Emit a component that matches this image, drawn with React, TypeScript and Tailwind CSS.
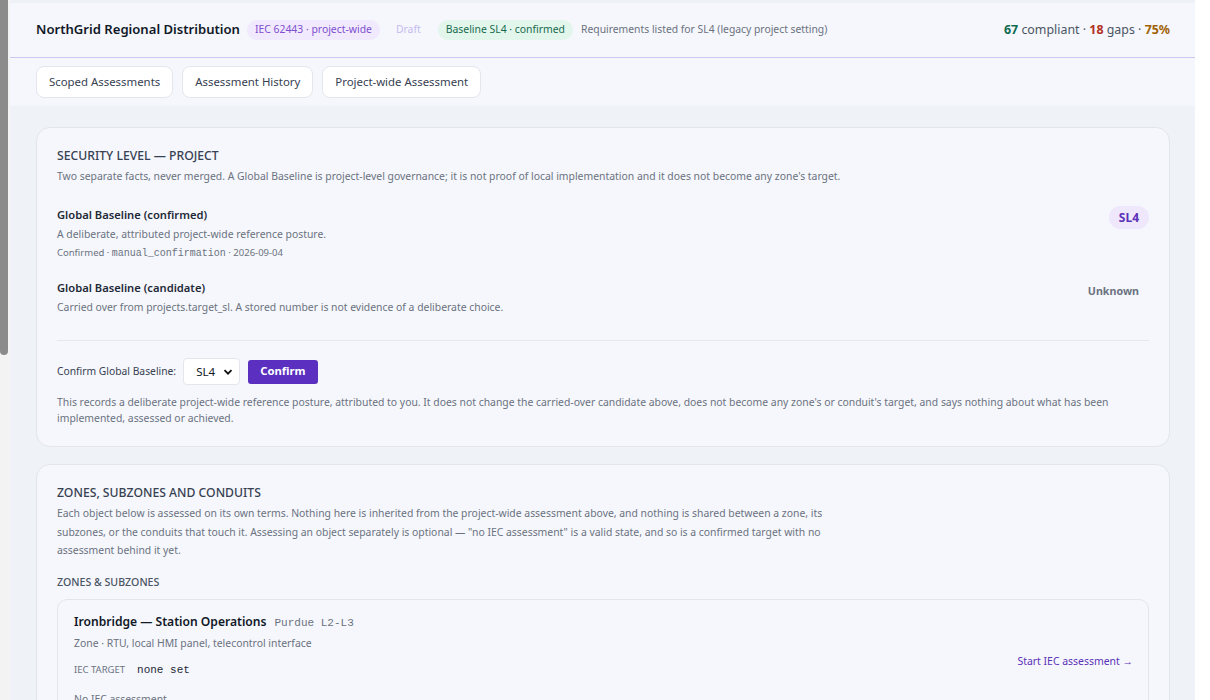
import React from 'react';

const sans = { fontFamily: '"Noto Sans", "Open Sans", sans-serif' };
const mono = '[font-family:"Liberation_Mono",monospace]';

function Pill({ children, className }: { children: React.ReactNode; className: string }) {
  return (
    <span className={`inline-flex items-center h-[20px] px-[8px] rounded-full text-[10.4px] ${className}`}>
      {children}
    </span>
  );
}

function BaselineRow({
  title,
  desc,
  meta,
  right,
}: {
  title: string;
  desc: string;
  meta?: React.ReactNode;
  right: React.ReactNode;
}) {
  return (
    <div className="flex items-start justify-between">
      <div>
        <div className="text-[11.2px] font-semibold text-[#1f2937] leading-[18px]">{title}</div>
        <div className="text-[10.4px] text-[#6b7280] mt-[2px] leading-[16px]">{desc}</div>
        {meta}
      </div>
      {right}
    </div>
  );
}

export default function App() {
  return (
    <div className="flex w-[1210px] h-[700px] overflow-hidden bg-white" style={sans}>
      {/* scrollbar */}
      <div className="w-[10px] shrink-0 bg-[#f3f3f3]">
        <div className="w-[8px] h-[355px] bg-[#8b8b8b] rounded-b-[4px]" />
      </div>

      <div className="w-[1185px] shrink-0 bg-[#eff2f7] flex flex-col">
        {/* header */}
        <div className="h-[58px] shrink-0 bg-[#f5f7fc] border-t-[3px] border-t-[#eef1f6] border-b border-b-[#cdc6ef] flex items-center justify-between pl-[26px] pr-[25px]">
          <div className="flex items-center">
            <span className="text-[13.1px] font-semibold text-[#111827] mr-[7px]">NorthGrid Regional Distribution</span>
            <Pill className="bg-[#f1e9fd] text-[#7e4fd0]">IEC 62443 · project-wide</Pill>
            <span className="text-[10.4px] text-[#c6baf0] ml-[16px] mr-[17px]">Draft</span>
            <Pill className="bg-[#e3f6ec] text-[#166b4e]">Baseline SL4 · confirmed</Pill>
            <span className="text-[10.35px] text-[#6b7280] ml-[8px]">Requirements listed for SL4 (legacy project setting)</span>
          </div>
          <div className="text-[12.4px] text-[#4b5563]">
            <span className="font-bold text-[#0f6b4f]">67</span> compliant · <span className="font-bold text-[#b4321f]">18</span> gaps ·{' '}
            <span className="font-bold text-[#a16207]">75%</span>
          </div>
        </div>

        {/* tabs */}
        <div className="shrink-0 bg-[#f5f7fc] flex gap-[9px] pl-[26px] pt-[8px] pb-[8px]">
          {['Scoped Assessments', 'Assessment History', 'Project-wide Assessment'].map((t) => (
            <button
              key={t}
              className="h-[32px] px-[12px] bg-white border border-[#e3e6ec] rounded-[8px] text-[11.4px] text-[#374151]"
            >
              {t}
            </button>
          ))}
        </div>

        <div className="flex flex-col gap-[17px] pl-[26px] pr-[25px] pt-[21px]">
          {/* security level card */}
          <section className="shrink-0 bg-[#f5f7fc] border border-[#e2e6ec] rounded-[14px] px-[20px] pt-[19px] pb-[20px]">
            <h2 className="text-[12.2px] font-medium text-[#374151] uppercase leading-[18px]">Security Level — Project</h2>
            <p className="text-[10.4px] text-[#6b7280] mt-[3px] leading-[16px]">
              Two separate facts, never merged. A Global Baseline is project-level governance; it is not proof of local implementation and it does not become any zone's target.
            </p>

            <div className="mt-[22px]">
              <BaselineRow
                title="Global Baseline (confirmed)"
                desc="A deliberate, attributed project-wide reference posture."
                meta={
                  <div className="text-[9.5px] text-[#6b7280] mt-[4px] leading-[14px]">
                    Confirmed · <span className={`${mono} text-[10px]`}>manual_confirmation</span> · 2026-09-04
                  </div>
                }
                right={
                  <span className="h-[23px] px-[10px] inline-flex items-center rounded-full bg-[#efe7fb] text-[#5b32b8] text-[12px] font-bold">
                    SL4
                  </span>
                }
              />
            </div>

            <div className="mt-[18px]">
              <BaselineRow
                title="Global Baseline (candidate)"
                desc="Carried over from projects.target_sl. A stored number is not evidence of a deliberate choice."
                right={<span className="mt-[4px] mr-[10px] text-[10.7px] font-bold text-[#6b7280]">Unknown</span>}
              />
            </div>

            <div className="border-t border-[#e4e7ec] mt-[25px]" />

            <div className="flex items-center mt-[17px]">
              <span className="text-[10.3px] text-[#374151]">Confirm Global Baseline:</span>
              <div className="ml-[7px] w-[57px] h-[27px] bg-white border border-[#e3e6ec] rounded-[4px] flex items-center justify-between pl-[12px] pr-[6px]">
                <span className="text-[11.5px] text-[#111827]">SL4</span>
                <svg width="10" height="10" viewBox="0 0 10 10">
                  <path d="M1.5 3.2 5 6.7 8.5 3.2" fill="none" stroke="#111" strokeWidth="1.8" />
                </svg>
              </div>
              <button className="ml-[8px] h-[24px] px-[12px] bg-[#5b2fc0] text-white text-[11.3px] font-bold rounded-[3px]">
                Confirm
              </button>
            </div>

            <p className="text-[10.4px] text-[#6b7280] mt-[9px] leading-[16px]">
              This records a deliberate project-wide reference posture, attributed to you. It does not change the carried-over candidate above, does not become any zone's or conduit's target, and says nothing about what has been implemented, assessed or achieved.
            </p>
          </section>

          {/* zones card */}
          <section className="shrink-0 bg-[#f5f7fc] border border-[#e2e6ec] rounded-[14px] px-[20px] pt-[19px]">
            <h2 className="text-[12.2px] font-medium text-[#374151] uppercase leading-[18px]">Zones, Subzones and Conduits</h2>
            <p className="text-[10.4px] text-[#6b7280] mt-[2px] leading-[18.5px] max-w-[770px]">
              Each object below is assessed on its own terms. Nothing here is inherited from the project-wide assessment above, and nothing is shared between a zone, its subzones, or the conduits that touch it. Assessing an object separately is optional — "no IEC assessment" is a valid state, and so is a confirmed target with no assessment behind it yet.
            </p>
            <h3 className="text-[10.6px] font-medium text-[#4b5563] uppercase mt-[14px] leading-[16px]">Zones &amp; Subzones</h3>

            <div className="mt-[9px] bg-[#f5f7fc] border border-[#e2e6ec] rounded-[10px] pl-[16px] pr-[15px] pt-[13px] pb-[20px] flex justify-between items-start">
              <div>
                <div className="flex items-baseline leading-[18px]">
                  <span className="text-[12.1px] font-semibold text-[#111827]">Ironbridge — Station Operations</span>
                  <span className={`${mono} text-[11px] text-[#6b7280] ml-[8px]`}>Purdue L2-L3</span>
                </div>
                <div className="text-[10.4px] text-[#6b7280] mt-[3px] leading-[16px]">Zone · RTU, local HMI panel, telecontrol interface</div>
                <div className="flex items-center mt-[12px] h-[16px]">
                  <span className="text-[9.5px] text-[#6b7280] uppercase">IEC target</span>
                  <span className={`${mono} text-[11px] text-[#1f2937] ml-[12px]`}>none set</span>
                </div>
                <div className="text-[10.4px] text-[#6b7280] mt-[12px] leading-[16px]">No IEC assessment</div>
              </div>
              <div className="mt-[40px] text-[10.45px] leading-[16px] text-[#5b32b8]">Start IEC assessment →</div>
            </div>
          </section>
        </div>
      </div>

      <div className="flex-1 bg-white" />
    </div>
  );
}
